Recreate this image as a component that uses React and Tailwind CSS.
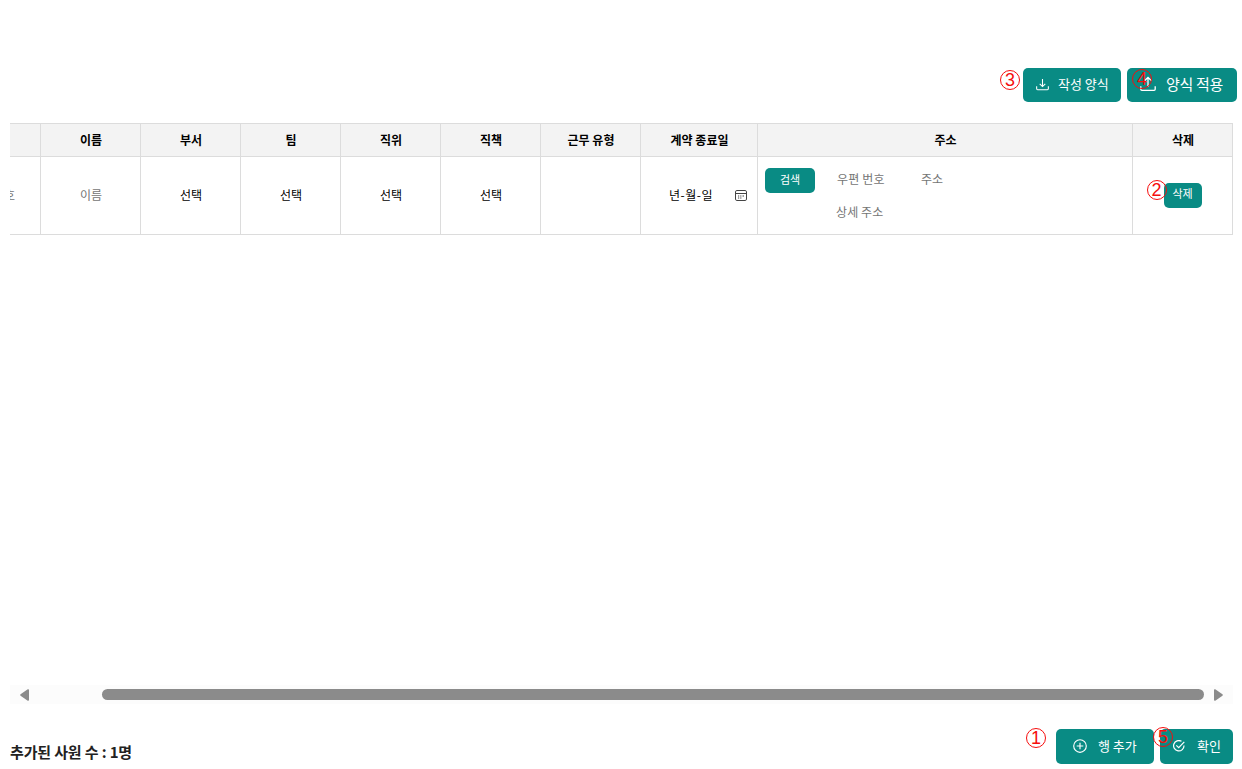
import React from 'react';

const columns = ['이름', '부서', '팀', '직위', '직책', '근무 유형', '계약 종료일', '주소', '삭제'];

function Badge({ label, className }) {
  return (
    <span className={`absolute flex h-5 w-5 items-center justify-center rounded-full border border-[#f60d0d] font-['Liberation_Sans'] text-[18px] leading-none text-[#f60d0d] ${className}`}>
      {label}
    </span>
  );
}

function TrayIcon({ up, className }) {
  return (
    <svg className={className} viewBox="0 0 14 14" fill="none" stroke="currentColor" strokeWidth="1.15">
      <path d="M.7 9v2.6q0 1 1 1h10.6q1 0 1-1V9" />
      {up ? <path d="M7 9.5V1.2M4 4.2l3-3 3 3" /> : <path d="M7 1v8.2M4 6.2l3 3 3-3" />}
    </svg>
  );
}

function PlusIcon() {
  return (
    <svg className="-mt-[2px] h-[14px] w-[14px]" viewBox="0 0 14 14" fill="none" stroke="currentColor" strokeWidth="1.15">
      <circle cx="7" cy="7" r="6.3" />
      <path d="M7 3.7v6.6M3.7 7h6.6" />
    </svg>
  );
}

function CheckIcon() {
  return (
    <svg className="-mt-[2px] h-3 w-3" viewBox="0 0 12 12" fill="none" stroke="currentColor" strokeWidth="1.2">
      <path d="M8.5 1.3A5.2 5.2 0 1 0 11 5.5" />
      <path d="M3.3 5.3l2.4 2.4 5.6-5.8" />
    </svg>
  );
}

function CalendarIcon() {
  return (
    <svg className="h-3 w-3" viewBox="0 0 12 12" fill="none" stroke="#444" strokeWidth="1">
      <rect x=".5" y="1.5" width="11" height="10" rx="1.4" />
      <path d="M.5 4.5h11" />
      <path d="M3 7h1.2M5.2 7h1.2M7.5 7h1.5M3 9h1.2M5.2 9h1.2" strokeWidth="1.2" />
    </svg>
  );
}

export default function App() {
  return (
    <main className="relative flex h-[769px] w-[1242px] flex-col overflow-hidden bg-white font-['Noto_Sans_CJK_KR',sans-serif] text-black">
      <div className="flex justify-end gap-1.5 pr-[5px] pt-[68px]">
        <div className="relative">
          <button className="flex h-[34px] w-[98px] items-center rounded-[5px] bg-[#098b84] pb-[2px] pl-[13px] text-[13px] leading-none text-white">
            <TrayIcon className="mr-[9px] h-[13px] w-[13px]" />
            <span className="whitespace-nowrap pb-[2px]">작성 양식</span>
          </button>
          <Badge label="3" className="-left-[23px] top-[2px]" />
        </div>
        <div className="relative">
          <button className="flex h-[34px] w-[110px] items-center rounded-[5px] bg-[#098b84] pb-[3px] pl-[13px] text-[15px] leading-none text-white">
            <TrayIcon up className="mr-[10px] h-4 w-4" />
            <span className="whitespace-nowrap tracking-[-0.3px]">양식 적용</span>
          </button>
          <Badge label="4" className="left-[5px] top-[1px]" />
        </div>
      </div>

      <div className="ml-[10px] mt-[21px] grid w-[1223px] grid-cols-[30px_repeat(6,100px)_117px_375px_101px] grid-rows-[33px_78px] border-t border-[#dcdcdc] text-[12px]">
        <div className="border-b border-[#dcdcdc] bg-[#f3f3f3]" />
        {columns.map((c) => (
          <div key={c} className={`flex items-center justify-center border-b border-l border-[#dcdcdc] bg-[#f3f3f3] pl-px font-bold ${c === '삭제' ? 'border-r' : ''}`}>
            {c}
          </div>
        ))}
        <div className="flex items-center overflow-hidden border-b border-[#dcdcdc] pb-[2px] text-[#757575]">
          <span className="-ml-[6px]">호</span>
        </div>
        <div className="flex items-center justify-center border-b border-l border-[#dcdcdc] pb-[2px] pl-px text-[#757575]">이름</div>
        {['부서', '팀', '직위', '직책'].map((c) => (
          <div key={c} className="flex items-center justify-center border-b border-l border-[#dcdcdc] pb-[2px] pl-px">선택</div>
        ))}
        <div className="border-b border-l border-[#dcdcdc]" />
        <div className="flex items-center justify-between border-b border-l border-[#dcdcdc] pb-[2px] pl-7 pr-[10px]">
          <span className="tracking-[0.5px]">년-월-일</span>
          <CalendarIcon />
        </div>
        <div className="flex items-start border-b border-l border-[#dcdcdc] pl-[7px] pt-[11px] text-[#757575]">
          <button className="h-[25px] w-[50px] rounded-[5px] bg-[#098b84] pb-[3px] text-[11px] leading-none text-white">검색</button>
          <div className="ml-[21px] flex flex-col gap-[15px] pt-[2px] leading-[18px]">
            <div className="flex">
              <span className="w-[84px] pl-px tracking-[0.2px]">우편 번호</span>
              <span className="pl-px">주소</span>
            </div>
            <span className="tracking-[0.1px]">상세 주소</span>
          </div>
        </div>
        <div className="flex items-center justify-center border-x border-b border-[#dcdcdc]">
          <div className="relative">
            <button className="block h-[25px] w-[38px] rounded-[5px] bg-[#098b84] pb-[4px] text-[11px] leading-none text-white">삭제</button>
            <Badge label="2" className="-left-[17px] -top-[3px]" />
          </div>
        </div>
      </div>

      <div className="ml-[10px] mt-[450px] flex h-[19px] w-[1223px] items-center bg-[#fcfcfc] pl-[10px] pr-[10px] text-[#8b8b8b]">
        <svg className="h-3 w-[9px]" viewBox="0 0 9 12"><path d="M8.2 1v10L1 6z" fill="currentColor" stroke="currentColor" strokeWidth="1.6" strokeLinejoin="round" /></svg>
        <div className="ml-[73px] h-[11px] w-[1102px] rounded-full bg-[#8b8b8b]" />
        <svg className="ml-auto h-3 w-[9px]" viewBox="0 0 9 12"><path d="M.8 1v10L8 6z" fill="currentColor" stroke="currentColor" strokeWidth="1.6" strokeLinejoin="round" /></svg>
      </div>

      <div className="mt-[25px] flex h-[35px] items-center pl-[10px] pr-[9px]">
        <p className="pt-[9px] text-[15px] font-bold leading-none tracking-[-0.15px] text-[#222]">추가된 사원 수 : 1명</p>
        <div className="relative ml-auto">
          <button className="flex h-[35px] w-[98px] items-center rounded-[5px] bg-[#098b84] pl-[17px] text-[13px] leading-none text-white">
            <PlusIcon />
            <span className="ml-[11px] whitespace-nowrap pb-[3px]">행 추가</span>
          </button>
          <Badge label="1" className="-left-[30px] -top-px" />
        </div>
        <div className="relative ml-1.5">
          <button className="flex h-[35px] w-[73px] items-center rounded-[5px] bg-[#098b84] pl-[13px] text-[13px] leading-none text-white">
            <CheckIcon />
            <span className="ml-3 whitespace-nowrap pb-[3px]">확인</span>
          </button>
          <Badge label="5" className="-left-[7px] -top-[2px]" />
        </div>
      </div>
    </main>
  );
}
